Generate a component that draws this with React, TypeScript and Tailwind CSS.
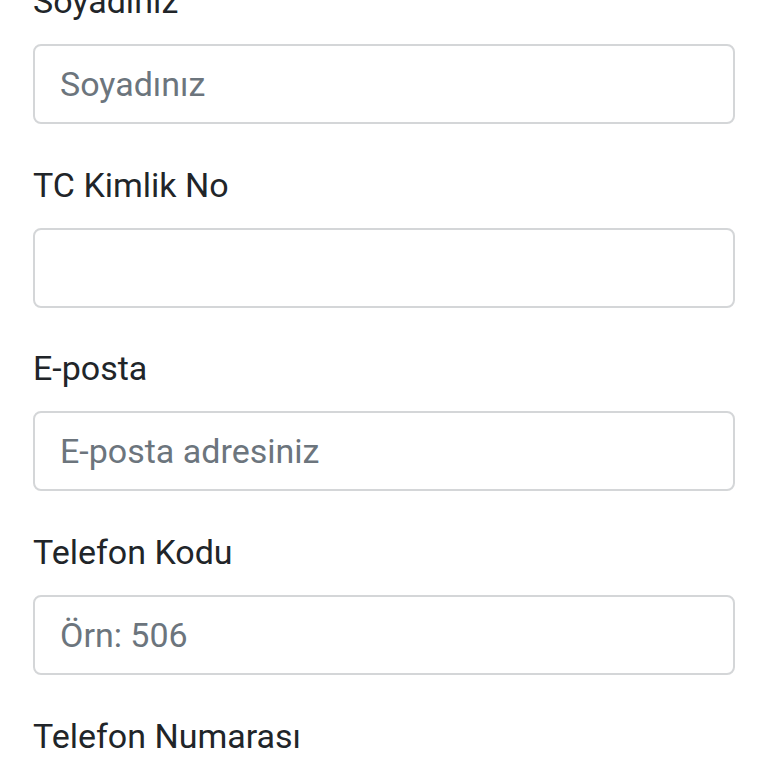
const fields = [
  { label: "Soyadınız", placeholder: "Soyadınız", type: "text" },
  { label: "TC Kimlik No", placeholder: "", type: "text" },
  { label: "E-posta", placeholder: "E-posta adresiniz", type: "email" },
  { label: "Telefon Kodu", placeholder: "Örn: 506", type: "text" },
  { label: "Telefon Numarası", placeholder: "", type: "text" },
];

export default function App() {
  return (
    <div className="h-[768px] overflow-hidden bg-white font-['Roboto',sans-serif]">
      <div className="-mt-[23px] flex flex-col gap-[36.67px] px-[33px]">
        {fields.map((f) => (
          <div key={f.label} className="flex flex-col gap-[19px]">
            <label className="text-[34px] leading-[48px] text-[#212529]">
              {f.label}
            </label>
            <input
              type={f.type}
              placeholder={f.placeholder}
              className="h-[80px] w-full rounded-[8px] border-2 border-[#d4d6d8] bg-white px-[25px] text-[34px] text-[#495057] outline-none placeholder:text-[#6c757d]"
            />
          </div>
        ))}
      </div>
    </div>
  );
}
